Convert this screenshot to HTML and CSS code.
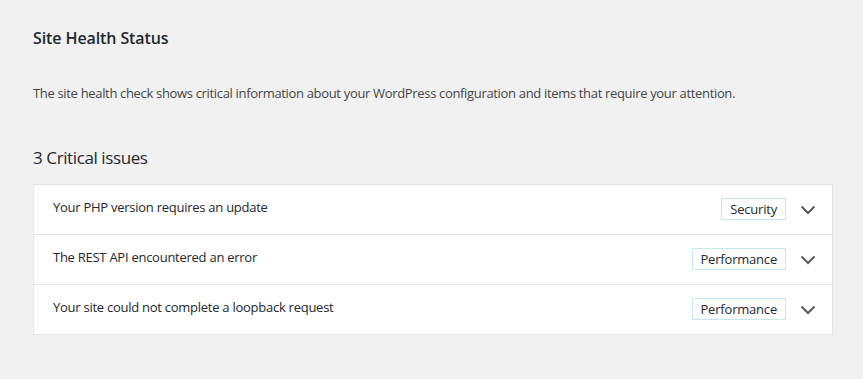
FILE: index.html
```html
<!DOCTYPE html>
<html>
<head>
<meta charset="utf-8">
<link rel="stylesheet" href="styles.css">
</head>
<body>
<div class="wrap">
  <h2 class="title">Site Health Status</h2>
  <p class="intro">The site health check shows critical information about your WordPress configuration and items that require your attention.</p>
  <h3 class="count">3 Critical issues</h3>
  <div class="panel">
    <div class="row">
      <span class="label">Your PHP version requires an update</span>
      <span class="badge">Security</span>
      <svg class="chev" viewBox="0 0 16 10" width="16" height="10"><path d="M1.5 1.5 L8 8 L14.5 1.5" fill="none" stroke="#555d66" stroke-width="2"/></svg>
    </div>
    <div class="row">
      <span class="label">The REST API encountered an error</span>
      <span class="badge">Performance</span>
      <svg class="chev" viewBox="0 0 16 10" width="16" height="10"><path d="M1.5 1.5 L8 8 L14.5 1.5" fill="none" stroke="#555d66" stroke-width="2"/></svg>
    </div>
    <div class="row">
      <span class="label">Your site could not complete a loopback request</span>
      <span class="badge">Performance</span>
      <svg class="chev" viewBox="0 0 16 10" width="16" height="10"><path d="M1.5 1.5 L8 8 L14.5 1.5" fill="none" stroke="#555d66" stroke-width="2"/></svg>
    </div>
  </div>
</div>
</body>
</html>
```

FILE: styles.css
```css
html, body {
  margin: 0;
  padding: 0;
  background: #f1f1f1;
}
body {
  font-family: "Open Sans", "Noto Sans", sans-serif;
  color: #23282d;
}
.wrap {
  padding: 27px 30px 0 33px;
}
.title {
  margin: 0;
  font-size: 16px;
  font-weight: 600;
  line-height: 22px;
  letter-spacing: -0.1px;
}
.intro {
  margin: 34px 0 0;
  font-size: 13px;
  line-height: 20px;
  color: #444;
  letter-spacing: -0.33px;
}
.count {
  margin: 43px 0 0;
  font-size: 17px;
  font-weight: 400;
  line-height: 24px;
  letter-spacing: -0.4px;
}
.panel {
  margin-top: 14px;
  background: #fff;
  border: 1px solid #e2e4e7;
}
.row {
  display: flex;
  align-items: center;
  height: 49px;
  padding: 0 16px 0 19px;
  border-top: 1px solid #e2e4e7;
  font-size: 13px;
}
.row:first-child {
  border-top: none;
}
.label {
  flex: 1;
  font-weight: 500;
  letter-spacing: -0.26px;
  margin-bottom: 6px;
}
.badge {
  border: 1px solid #c5e7f2;
  height: 20px;
  line-height: 20px;
  padding: 0 8px;
  font-size: 13px;
  letter-spacing: -0.2px;
  margin-bottom: 2px;
}
.chev {
  margin-left: 14px;
}
```
